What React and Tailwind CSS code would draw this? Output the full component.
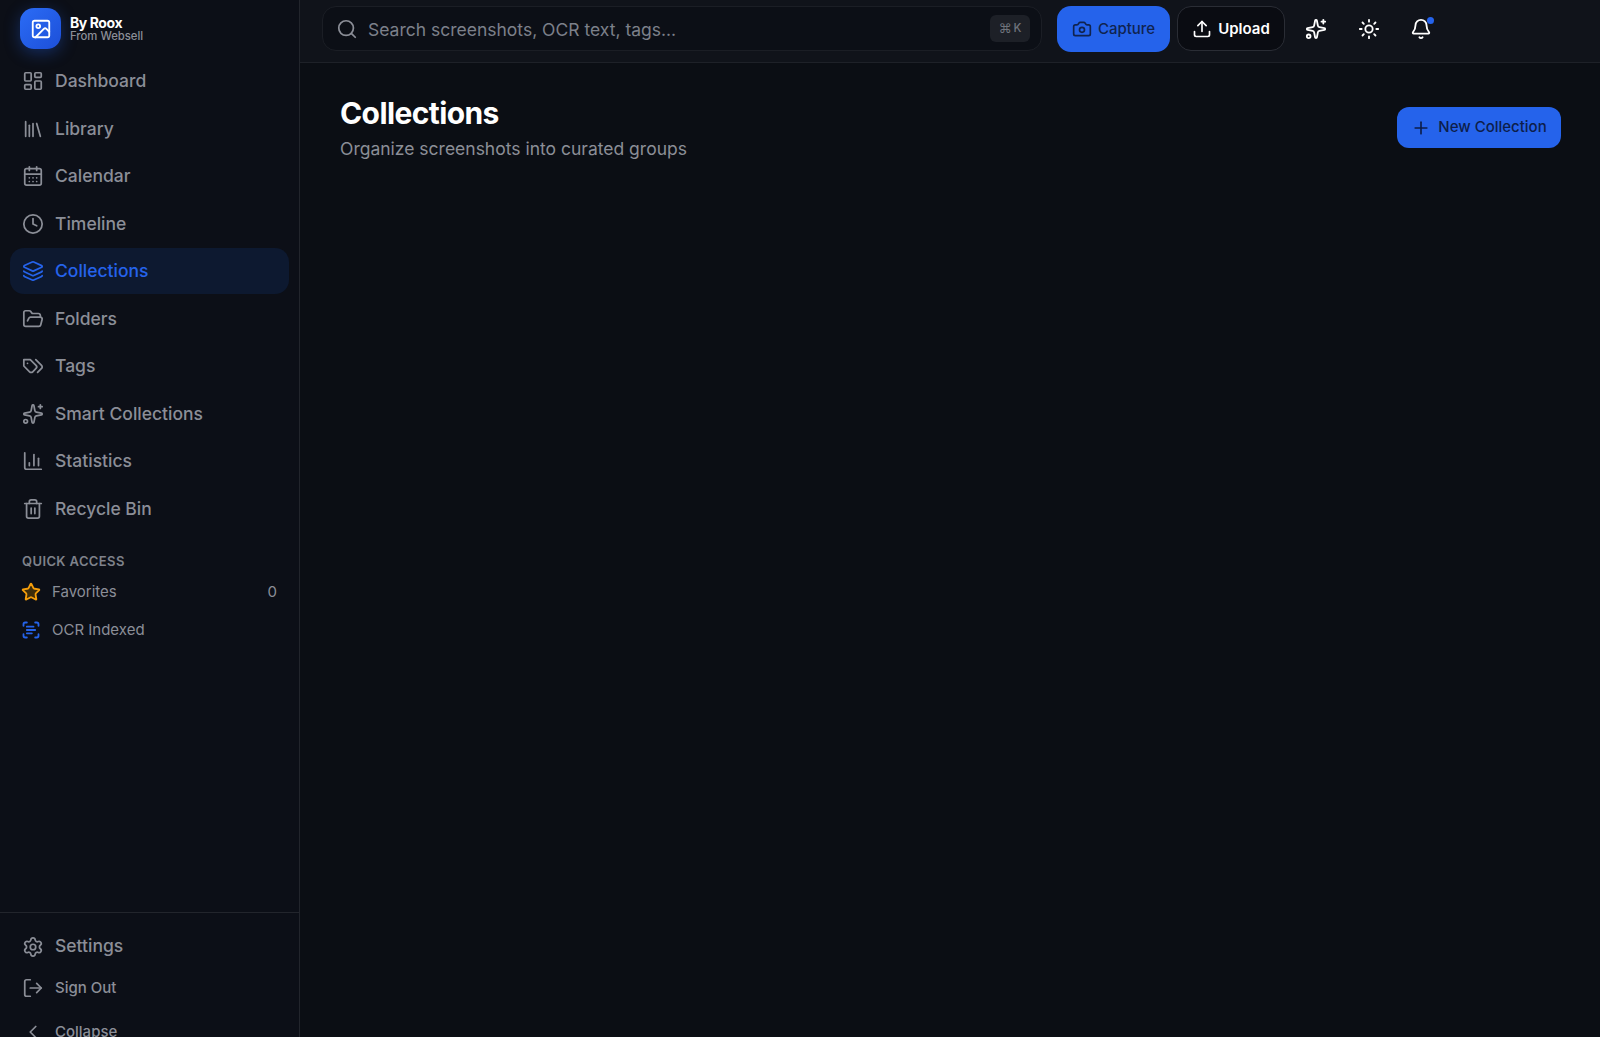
import {
  Bell,
  CalendarDays,
  Camera,
  ChartColumn,
  ChevronLeft,
  Clock,
  FolderOpen,
  Image,
  Layers,
  LayoutDashboard,
  Library,
  LogOut,
  Plus,
  ScanText,
  Search,
  Settings,
  Sparkles,
  Star,
  Sun,
  Trash2,
  Upload,
} from 'lucide-react';

// lucide's current Tags is the diagonal one, the picture has the older shape
function TagsIcon({ className, strokeWidth }) {
  return (
    <svg
      className={className}
      viewBox="0 0 24 24"
      fill="none"
      stroke="currentColor"
      strokeWidth={strokeWidth}
      strokeLinecap="round"
      strokeLinejoin="round"
    >
      <path d="M9 5H2v7l6.29 6.29c.94.94 2.48.94 3.42 0l3.58-3.58c.94-.94.94-2.48 0-3.42L9 5Z" />
      <path d="M6 9.01V9" />
      <path d="m15 5 6.3 6.3a2.4 2.4 0 0 1 0 3.4L17 19" />
    </svg>
  );
}

const navItems = [
  { label: 'Dashboard', icon: LayoutDashboard },
  { label: 'Library', icon: Library },
  { label: 'Calendar', icon: CalendarDays },
  { label: 'Timeline', icon: Clock },
  { label: 'Collections', icon: Layers, active: true },
  { label: 'Folders', icon: FolderOpen },
  { label: 'Tags', icon: TagsIcon },
  { label: 'Smart Collections', icon: Sparkles },
  { label: 'Statistics', icon: ChartColumn },
  { label: 'Recycle Bin', icon: Trash2 },
];

function NavRow({ label, icon: Icon, active }) {
  return (
    <div
      className={`mx-[10px] flex h-[46px] items-center gap-[11.5px] rounded-[14px] px-[11.5px] text-[17.5px] font-medium ${
        active ? 'bg-[#0d1930] text-[#2563eb]' : 'text-[#8b8e97]'
      }`}
    >
      <Icon className="h-[22px] w-[22px] shrink-0" strokeWidth={1.9} />
      <span className="pt-[1px]">{label}</span>
    </div>
  );
}

function Sidebar() {
  return (
    <aside className="flex h-full w-[300px] shrink-0 flex-col border-r border-[#22252c] bg-[#0c0f17]">
      <div className="flex h-[58px] shrink-0 items-start gap-[9px] pl-[20px] pt-[8px]">
        <div className="flex h-[41px] w-[41px] items-center justify-center rounded-[14px] bg-gradient-to-br from-[#2b6cf6] to-[#1d4fd8] shadow-[0_4px_16px_rgba(37,99,235,0.35)]">
          <Image className="h-[22px] w-[22px] text-white" strokeWidth={2} />
        </div>
        <div className="pt-[8px]">
          <p className="text-[14px] leading-[13px] font-bold tracking-[-0.03em] text-white">By Roox</p>
          <p className="text-[11.3px] leading-[15px] font-medium text-[#8b8e97]">From Websell</p>
        </div>
      </div>

      <nav className="flex flex-col gap-[1.5px]">
        {navItems.map((item) => (
          <NavRow key={item.label} {...item} />
        ))}
      </nav>

      <div className="mt-[21px] flex-1 px-[22px]">
        <p className="text-[13px] leading-[16px] font-semibold tracking-[0.03em] text-[#7f828b]">QUICK ACCESS</p>
        <div className="mt-[5px] -ml-[1px] flex h-[37.5px] items-center gap-[11px] text-[15px] text-[#8b8e97]">
          <Star className="h-5 w-5 fill-[#3d2c0a] text-[#f59e0b]" strokeWidth={2.2} />
          <span className="flex-1">Favorites</span>
          <span>0</span>
        </div>
        <div className="-ml-[1px] flex h-[37.5px] items-center gap-[11px] text-[15px] text-[#8b8e97]">
          <ScanText className="h-5 w-5 text-[#2563eb]" strokeWidth={2.2} />
          <span>OCR Indexed</span>
        </div>
      </div>

      <div className="h-[125px] shrink-0 overflow-hidden border-t border-[#22252c] pt-[10px]">
        <div className="flex h-[47px] items-center gap-[11.5px] pl-[21.5px] text-[17.5px] font-medium text-[#8b8e97]">
          <Settings className="h-[22px] w-[22px]" strokeWidth={1.9} />
          <span>Settings</span>
        </div>
        <div className="-mt-[2px] flex h-[40px] items-center gap-[11.5px] pl-[21.5px] text-[15px] font-medium text-[#8b8e97]">
          <LogOut className="h-[22px] w-[22px]" strokeWidth={1.9} />
          <span>Sign Out</span>
        </div>
        <div className="mt-[4px] flex h-[40px] items-center gap-[11.5px] pl-[21.5px] text-[15px] font-medium text-[#8b8e97]">
          <ChevronLeft className="h-[22px] w-[22px]" strokeWidth={1.9} />
          <span>Collapse</span>
        </div>
      </div>
    </aside>
  );
}

function Header() {
  return (
    <header className="flex h-[63px] shrink-0 items-start gap-[7px] border-b border-[#1e2128] bg-[#10131a] pl-[22px] pt-[6px]">
      <div className="flex h-[45px] w-[720px] items-center rounded-[14px] border border-[#1b1e25] bg-[#0c0f16] pl-[13px] pr-[11px]">
        <Search className="h-[22px] w-[22px] text-[#8b8e97]" strokeWidth={1.9} />
        <span className="ml-[10px] flex-1 pt-[3px] text-[17.5px] text-[#7c808a]">Search screenshots, OCR text, tags...</span>
        <kbd className="flex h-[27px] w-[40px] items-center justify-center gap-[2px] rounded-[6px] bg-[#1d2027] font-['Inter',sans-serif] text-[11.5px] font-medium text-[#6f737c]">
          <span className="font-['DejaVu_Sans',sans-serif] text-[13px]">⌘</span>
          <span>K</span>
        </kbd>
      </div>
      <button className="ml-[8px] flex h-[46px] w-[113px] items-center justify-center gap-[6px] rounded-[14px] bg-[#2563eb] text-[15px] font-medium text-[#10234f]">
        <Camera className="h-5 w-5" strokeWidth={2} />
        Capture
      </button>
      <button className="flex h-[45px] w-[108px] items-center justify-center gap-[6px] rounded-[14px] border border-[#2a2d35] bg-[#0a0c12] pt-[1px] text-[15px] font-semibold text-white">
        <Upload className="h-5 w-5" strokeWidth={2} />
        Upload
      </button>
      <div className="ml-[13px] flex h-[45px] items-center gap-[30.5px] text-white">
        <Sparkles className="h-[22px] w-[22px]" strokeWidth={2} />
        <Sun className="h-[22px] w-[22px]" strokeWidth={2} />
        <span className="relative">
          <Bell className="h-[22px] w-[22px]" strokeWidth={2} />
          <span className="absolute -right-[2px] -top-[1px] h-[7px] w-[7px] rounded-full bg-[#2563eb]" />
        </span>
      </div>
    </header>
  );
}

export default function App() {
  return (
    <div className="flex h-[1037px] overflow-hidden bg-[#0b0e14] font-['Inter',sans-serif]">
      <Sidebar />
      <div className="flex min-w-0 flex-1 flex-col">
        <Header />
        <main className="flex items-start justify-between pl-[40px] pr-[39px] pt-[32px]">
          <div>
            <h1 className="text-[30px] leading-[36px] font-bold tracking-[-0.02em] text-white">Collections</h1>
            <p className="mt-[4px] text-[17.5px] leading-[28px] text-[#8b8e97]">Organize screenshots into curated groups</p>
          </div>
          <button className="mt-[12px] flex h-[41px] w-[164px] items-center justify-center gap-[7px] rounded-[12px] bg-[#2563eb] text-[15px] font-medium text-[#0d1e4a]">
            <Plus className="h-5 w-5" strokeWidth={2} />
            New Collection
          </button>
        </main>
      </div>
    </div>
  );
}
